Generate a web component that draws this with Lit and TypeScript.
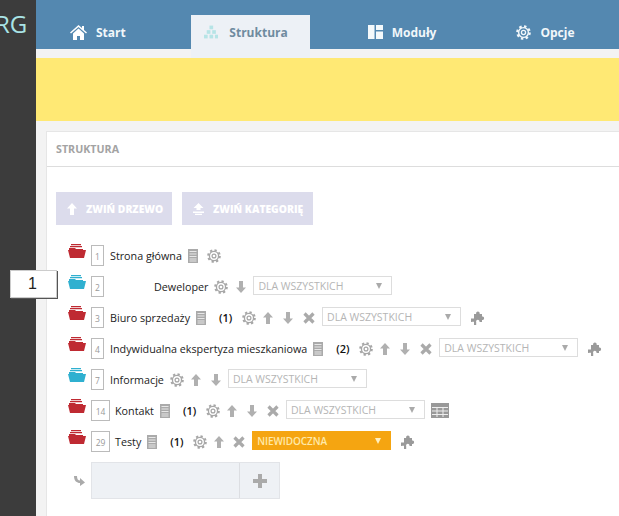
import { LitElement, html, css } from "lit";
import { customElement } from "lit/decorators.js";

const gear = (size = 14) => html`<svg class="gear" width=${size} height=${size} viewBox="0 0 16 16">
  <circle cx="8" cy="8" r="6.6" fill="none" stroke="currentColor" stroke-width="2.4" pathLength="16" stroke-dasharray="1 1" />
  <circle cx="8" cy="8" r="5.2" fill="none" stroke="currentColor" stroke-width="1.5" />
  <circle cx="8" cy="8" r="2.2" fill="none" stroke="currentColor" stroke-width="1.4" />
</svg>`;

const folder = (color: string) => html`<svg class="folder" width="18" height="14" viewBox="0 0 18 14">
  <path d="M3 0h10v1.200H3zM2 2h12v1.200H2z" fill=${color} />
  <path d="M1 4h6l1 1h7v2H1z" fill=${color} />
  <path d="M0 6h18l-2 8H2z" fill=${color} />
</svg>`;

const doc = html`<svg class="doc" width="10" height="14" viewBox="0 0 10 14">
  <rect width="10" height="14" fill="#aaa" />
  <path d="M1.500 2.500h7M1.500 5h7M1.500 7.500h7M1.500 10h7M1.500 12h7" stroke="#eee" stroke-width=".9" />
</svg>`;

const up = html`<svg class="up" width="10" height="12" viewBox="0 0 10 12">
  <path d="M5 0l5 5.500H7V12H3V5.500H0z" fill="#b0b0b0" />
</svg>`;

const down = html`<svg class="down" width="10" height="12" viewBox="0 0 10 12">
  <path d="M5 12l5-5.500H7V0H3v6.500H0z" fill="#b0b0b0" />
</svg>`;

const cross = html`<svg class="cross" width="12" height="12" viewBox="0 0 12 12">
  <path d="M1.500 1.500l9 9M10.500 1.500l-9 9" stroke="#aaa" stroke-width="3.200" />
</svg>`;

const puzzle = html`<svg class="puzzle" width="14" height="14" viewBox="0 0 14 14">
  <path d="M3 3h2.200a1.800 1.800 0 1 1 3.400 0H11v2.600a1.700 1.700 0 1 1 0 3.300V11H8.400a1.700 1.700 0 1 0-3.200 0V14H3v-3.200H1.500a1.700 1.700 0 1 1 0-3.300H3z" fill="#9a9a9a" />
</svg>`;

const table = html`<svg class="table" width="18" height="15" viewBox="0 0 18 15">
  <rect width="18" height="15" fill="#999" />
  <path d="M1 4.500h16M1 8h16M1 11.500h16M6 4v10M12 4v10" stroke="#eee" stroke-width="1" />
</svg>`;

const ICONS: Record<string, unknown> = { doc, up, down, cross, puzzle, table };

interface Row {
  nr: number;
  name: string;
  color: string;
  count?: number;
  // what follows the name, in screen order
  before: string[];
  access?: string;
  after?: string;
  indent?: boolean;
}

const RED = "#bf2a32";
const BLUE = "#2fb0d0";

const ROWS: Row[] = [
  { nr: 1, name: "Strona główna", color: RED, before: ["doc", "gear"] },
  { nr: 2, name: "Deweloper", color: BLUE, before: ["gear", "down"], access: "DLA WSZYSTKICH", indent: true },
  { nr: 3, name: "Biuro sprzedaży", color: RED, count: 1, before: ["gear", "up", "down", "cross"], access: "DLA WSZYSTKICH", after: "puzzle" },
  { nr: 4, name: "Indywidualna ekspertyza mieszkaniowa", color: RED, count: 2, before: ["gear", "up", "down", "cross"], access: "DLA WSZYSTKICH", after: "puzzle" },
  { nr: 7, name: "Informacje", color: BLUE, before: ["gear", "up", "down"], access: "DLA WSZYSTKICH" },
  { nr: 14, name: "Kontakt", color: RED, count: 1, before: ["gear", "up", "down", "cross"], access: "DLA WSZYSTKICH", after: "table" },
  { nr: 29, name: "Testy", color: RED, count: 1, before: ["gear", "up", "cross"], access: "NIEWIDOCZNA", after: "puzzle" },
];

@customElement("app-root")
export class AppRoot extends LitElement {
  static styles = css`
    :host {
      display: flex;
      width: 619px;
      height: 516px;
      overflow: hidden;
      position: relative;
      background: #f3f3f3;
      font-family: "Open Sans", "Noto Sans", sans-serif;
    }

    .side {
      flex: none;
      width: 36px;
      background: #3c3c3c;
      color: #a9e4e6;
      font-size: 24px;
      line-height: 30px;
      padding-top: 9px;
      box-sizing: border-box;
      overflow: hidden;
      text-indent: -5px;
    }

    .main {
      flex: none;
      width: 583px;
      display: flex;
      flex-direction: column;
    }

    nav {
      height: 49px;
      background: #5488b0;
      display: flex;
      align-items: flex-end;
      padding-left: 21px;
      flex: none;
    }

    .tab {
      height: 34px;
      padding: 0 22px 0 13px;
      display: flex;
      align-items: center;
      gap: 9px;
      color: #f1f7fa;
      font-size: 12px;
      font-weight: 700;
      margin-right: 45px;
    }

    .tab.first {
      margin-right: 43px;
    }

    .tab.active {
      width: 119px;
      box-sizing: border-box;
      background: #edf1f6;
      color: #6f8b9f;
      gap: 11px;
    }

    .tab .gear {
      color: inherit;
      margin-left: 0;
    }

    .strip {
      height: 9px;
      flex: none;
    }

    .tab-tail {
      margin-left: 155px;
      width: 119px;
      height: 100%;
      background: #edf1f6;
    }

    .notice {
      height: 63px;
      background: #ffe974;
      flex: none;
    }

    .panel {
      flex: 1;
      margin: 10px -4px -2px 10px;
      background: #fff;
      border: 1px solid #e6e6e6;
      border-right: none;
    }

    .panel-head {
      height: 34px;
      border-bottom: 1px solid #ddd;
      padding-left: 9px;
      display: flex;
      align-items: center;
      font-size: 10.700px;
      font-weight: 700;
      color: #a3a3a3;
    }

    .panel-body {
      padding: 25px 0 0 9px;
    }

    .buttons {
      display: flex;
      gap: 10px;
      margin-bottom: 15px;
    }

    .btn {
      height: 33px;
      background: #dcdcec;
      color: #fff;
      font-size: 10.300px;
      font-weight: 800;
      display: flex;
      align-items: center;
      gap: 9px;
      padding-left: 11px;
      box-sizing: border-box;
      white-space: nowrap;
    }

    .btn.tree {
      width: 116px;
    }

    .btn.cat {
      width: 131px;
    }

    .row {
      height: 31px;
      display: flex;
      align-items: center;
      margin-left: 12px;
      font-size: 10.750px;
      color: #222;
      white-space: nowrap;
    }

    .folder {
      flex: none;
      margin: -10px 5px 0 0;
    }

    .nr {
      flex: none;
      box-sizing: border-box;
      width: 13px;
      height: 21px;
      border: 1px solid #bbb;
      margin-right: 6px;
      display: flex;
      align-items: center;
      justify-content: center;
      padding-top: 2px;
      font-size: 8.500px;
      color: #999;
    }

    .nr.wide {
      width: 19px;
      margin-right: 5px;
    }

    .name.indent {
      padding-left: 44px;
    }

    .row svg {
      flex: none;
    }

    .gear {
      color: #a6a6a6;
      margin-left: 9px;
    }

    .name + .gear {
      margin-left: 6px;
    }

    .doc {
      margin-left: 6px;
    }

    .count {
      margin-left: 13px;
      width: 14px;
      font-size: 11px;
      font-weight: 600;
      color: #111;
    }

    .up {
      margin-left: 7px;
    }

    .down {
      margin-left: 10px;
    }

    .gear + .down {
      margin-left: 8px;
    }

    .cross {
      margin-left: 10px;
    }

    .up + .cross {
      margin-left: 9px;
    }

    .select {
      flex: none;
      box-sizing: border-box;
      width: 139px;
      height: 19px;
      margin: -2px 0 0 7px;
      padding: 0 9px 0 4px;
      border: 1px solid #ddd;
      display: flex;
      align-items: center;
      justify-content: space-between;
      font-size: 10.500px;
      color: #b5b5b5;
    }

    .select::after {
      content: "";
      border: 3.500px solid transparent;
      border-top: 6px solid #aaa;
      border-bottom: none;
    }

    .select.hidden {
      background: #f5a511;
      border-color: #f5a511;
      color: #ffe9a8;
      font-size: 10px;
      letter-spacing: -0.1px;
      font-weight: 600;
    }

    .select.hidden::after {
      border-top-color: #fff0c0;
    }

    .puzzle {
      margin-left: 10px;
    }

    .table {
      margin-left: 6px;
    }

    .add {
      display: flex;
      align-items: center;
      margin: 5px 0 0 18px;
    }

    .add-arrow {
      margin-right: 6px;
    }

    .add-box {
      box-sizing: border-box;
      width: 189px;
      height: 37px;
      display: flex;
      background: #eef1f5;
      border: 1px solid #e2e4e8;
    }

    .add-input {
      width: 147px;
      border-right: 1px solid #dcdee2;
    }

    .add-plus {
      flex: 1;
      display: flex;
      align-items: center;
      justify-content: center;
    }

    .callout {
      position: absolute;
      left: 10px;
      top: 270px;
      width: 47px;
      height: 28px;
      box-sizing: border-box;
      background: #fff;
      border: 1px solid #ccc;
      box-shadow: 1px 1px 0 #555;
      font-family: "Liberation Sans", sans-serif;
      font-size: 16px;
      line-height: 26px;
      padding-left: 17px;
      color: #222;
    }
  `;

  renderIcon(name: string) {
    return name === "gear" ? gear() : ICONS[name];
  }

  renderRow(r: Row) {
    return html`<div class="row">
      ${folder(r.color)}
      <span class="nr ${r.nr > 9 ? "wide" : ""}">${r.nr}</span>
      <span class="name ${r.indent ? "indent" : ""}">${r.name}</span>
      ${r.count !== undefined ? html`${doc}<span class="count">(${r.count})</span>` : r.nr === 1 ? doc : ""}
      ${r.before.filter((n) => n !== "doc").map((n) => this.renderIcon(n))}
      ${r.access
        ? html`<div class="select ${r.access === "NIEWIDOCZNA" ? "hidden" : ""}">${r.access}</div>`
        : ""}
      ${r.after ? this.renderIcon(r.after) : ""}
    </div>`;
  }

  render() {
    return html`
      <aside class="side">RG</aside>
      <div class="main">
        <nav>
          <div class="tab first">
            <svg width="17" height="15" viewBox="0 0 17 15">
              <path d="M8.500 0L0 7.500l1 1 7.500-6.500L16 8.500l1-1-3-2.600V1h-2v2.100z" fill="#fff" />
              <path d="M3 8.500l5.500-5 5.500 5V15H10v-4H7v4H3z" fill="#fff" />
            </svg>
            Start
          </div>
          <div class="tab active">
            <svg width="16" height="14" viewBox="0 0 16 14" fill="#b6e4e6">
              <rect x="6" y="0" width="4" height="4" />
              <rect x="3" y="5" width="4" height="4" />
              <rect x="9" y="5" width="4" height="4" />
              <rect x="0" y="10" width="4" height="4" />
              <rect x="6" y="10" width="4" height="4" />
              <rect x="12" y="10" width="4" height="4" />
            </svg>
            Struktura
          </div>
          <div class="tab">
            <svg width="15" height="14" viewBox="0 0 15 14" fill="#f4f9fb">
              <rect width="6.500" height="14" />
              <rect x="8" width="7" height="5" />
              <rect x="8" y="6.500" width="7" height="7.500" />
            </svg>
            Moduły
          </div>
          <div class="tab">${gear(15)} Opcje</div>
        </nav>
        <div class="strip"><div class="tab-tail"></div></div>
        <div class="notice"></div>
        <section class="panel">
          <div class="panel-head">STRUKTURA</div>
          <div class="panel-body">
            <div class="buttons">
              <div class="btn tree">
                <svg width="10" height="12" viewBox="0 0 10 12">
                  <path d="M5 0l5 5.500H7V12H3V5.500H0z" fill="#fff" />
                </svg>
                ZWIŃ DRZEWO
              </div>
              <div class="btn cat">
                <svg width="11" height="12" viewBox="0 0 11 12">
                  <path d="M5.500 0l5 5H7.500v2h-4V5H.5zM0 8.500h11V10H0zM2 10.800h7V12H2z" fill="#fff" />
                </svg>
                ZWIŃ KATEGORIĘ
              </div>
            </div>
            ${ROWS.map((r) => this.renderRow(r))}
            <div class="add">
              <svg class="add-arrow" width="11" height="11" viewBox="0 0 11 11">
                <path d="M0 1l3 0c0 3 1 4.500 3 4.500V3l5 4.500L6 11V8C3 8 0 6 0 1z" fill="#aaa" />
              </svg>
              <div class="add-box">
                <div class="add-input"></div>
                <div class="add-plus">
                  <svg width="14" height="14" viewBox="0 0 14 14">
                    <path d="M5 0h4v5h5v4H9v5H5V9H0V5h5z" fill="#aaa" />
                  </svg>
                </div>
              </div>
            </div>
          </div>
        </section>
      </div>
      <div class="callout">1</div>
    `;
  }
}
